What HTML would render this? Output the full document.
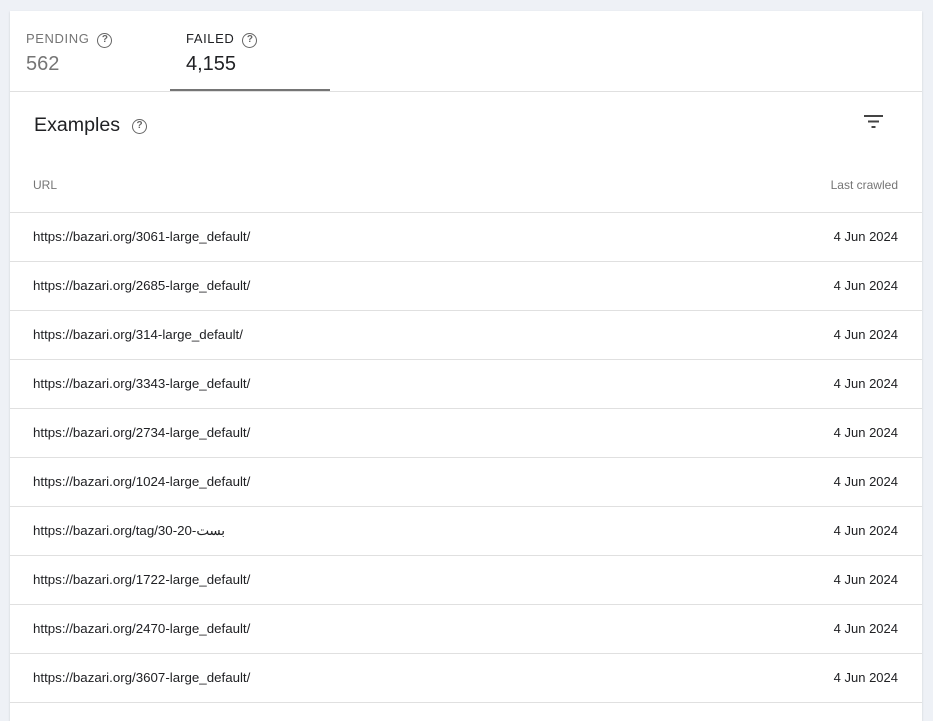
<!DOCTYPE html>
<html><head><meta charset="utf-8"><style>
*{margin:0;padding:0;box-sizing:border-box}
html,body{width:933px;height:721px;overflow:hidden}
body{background:#eef1f6;font-family:"Liberation Sans",Arial,sans-serif;position:relative}
.card{position:absolute;left:10px;top:11px;width:912px;height:710px;background:#fff;box-shadow:0 1px 2px rgba(60,64,67,.2)}
.tab{position:absolute;top:0;height:80px}
.lbl{position:absolute;top:20px;font-size:13px;letter-spacing:.6px;white-space:nowrap}
.num{position:absolute;top:42px;font-size:20px}
.q{display:inline-block;width:15px;height:15px;border:1.5px solid #666;border-radius:50%;font-size:10px;text-align:center;line-height:12px;font-weight:bold;color:#666;vertical-align:1px;margin-left:8px;letter-spacing:0}
.ul{position:absolute;left:160px;top:78px;width:160px;height:2px;background:#757575}
.div{position:absolute;left:0;top:80px;width:912px;height:1px;background:#e0e0e0}
.ex{position:absolute;left:24px;top:103px;font-size:19.6px;color:#202124}
.ex .q{vertical-align:3px;margin-left:12px}
.hdr{position:absolute;top:167px;font-size:12px;color:#757575}
.row{position:absolute;left:0;width:912px;height:49px;border-top:1px solid #e0e0e0;font-size:13.3px;color:#202124}
.row .u{position:absolute;left:23px;top:16px}
.row .d{position:absolute;right:24px;top:16px;font-size:13px}
</style></head><body>
<div class="card">
<div class="tab"><div class="lbl" style="left:16px;color:#757575">PENDING<span class="q">?</span></div><div class="num" style="left:16px;color:#757575">562</div></div>
<div class="tab"><div class="lbl" style="left:176px;color:#202124">FAILED<span class="q">?</span></div><div class="num" style="left:176px;color:#202124">4,155</div></div>
<div class="ul"></div><div class="div"></div>
<div class="ex">Examples<span class="q">?</span></div>
<svg style="position:absolute;left:854px;top:104px" width="20" height="14"><rect x="0" y="0" width="19" height="2" fill="#444"/><rect x="4" y="5.5" width="11" height="2" fill="#444"/><rect x="7.5" y="11" width="4" height="2" fill="#444"/></svg>
<div class="hdr" style="left:23px">URL</div>
<div class="hdr" style="right:24px">Last crawled</div>
<div class="row" style="top:201px"><span class="u">https://bazari.org/3061-large_default/</span><span class="d">4 Jun 2024</span></div>
<div class="row" style="top:250px"><span class="u">https://bazari.org/2685-large_default/</span><span class="d">4 Jun 2024</span></div>
<div class="row" style="top:299px"><span class="u">https://bazari.org/314-large_default/</span><span class="d">4 Jun 2024</span></div>
<div class="row" style="top:348px"><span class="u">https://bazari.org/3343-large_default/</span><span class="d">4 Jun 2024</span></div>
<div class="row" style="top:397px"><span class="u">https://bazari.org/2734-large_default/</span><span class="d">4 Jun 2024</span></div>
<div class="row" style="top:446px"><span class="u">https://bazari.org/1024-large_default/</span><span class="d">4 Jun 2024</span></div>
<div class="row" style="top:495px"><span class="u">https://bazari.org/tag/30-20-بست</span><span class="d">4 Jun 2024</span></div>
<div class="row" style="top:544px"><span class="u">https://bazari.org/1722-large_default/</span><span class="d">4 Jun 2024</span></div>
<div class="row" style="top:593px"><span class="u">https://bazari.org/2470-large_default/</span><span class="d">4 Jun 2024</span></div>
<div class="row" style="top:642px"><span class="u">https://bazari.org/3607-large_default/</span><span class="d">4 Jun 2024</span></div>
<div class="row" style="top:691px"></div>
</div>
</body></html>
